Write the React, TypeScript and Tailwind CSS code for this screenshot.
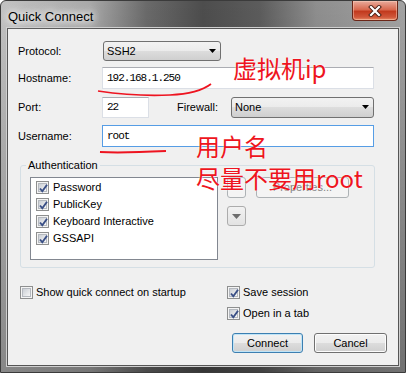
import React from 'react';

// Win7-style checkbox
function Check({ checked }: { checked?: boolean }) {
  return (
    <span className="relative flex h-[13px] w-[13px] shrink-0 items-center justify-center border border-[#8e8f8f] bg-[#f4f4f4]">
      <span className="h-[9px] w-[9px] border border-[#b5b9bf] bg-[linear-gradient(135deg,#cbcfd5,#f6f6f6)]" />
      {checked && (
        <svg className="absolute left-[1px] top-[1px]" width="11" height="11" viewBox="0 0 11 11">
          <path d="M2 5.5 L4.3 8.3 L9 1.8" fill="none" stroke="#3a4f86" strokeWidth="1.9" />
        </svg>
      )}
    </span>
  );
}

function Arrow({ color = '#000' }: { color?: string }) {
  return (
    <svg width="7" height="4" viewBox="0 0 7 4">
      <polygon points="0,0 7,0 3.5,4" fill={color} />
    </svg>
  );
}

function Combo({ value, className }: { value: string; className: string }) {
  return (
    <div
      className={`flex items-center justify-between rounded-[3px] border border-[#707070] bg-[linear-gradient(to_bottom,#f2f2f2_0%,#ebebeb_50%,#dddddd_50%,#cfcfcf_100%)] pl-[3px] pr-[4px] text-[11px] text-black ${className}`}
    >
      <span>{value}</span>
      <Arrow />
    </div>
  );
}

function Field({ value, className, focused }: { value: string; className: string; focused?: boolean }) {
  return (
    <div
      className={`flex items-center border bg-white pl-[4px] font-['Liberation_Mono',monospace] text-[11px] tracking-[-1px] text-black ${
        focused ? 'border-[#569de5]' : 'border-[#dbdfe6] border-t-[#abadb3]'
      } ${className}`}
    >
      {value}
    </div>
  );
}

const authMethods = ['Password', 'PublicKey', 'Keyboard Interactive', 'GSSAPI'];

export default function App() {
  return (
    <div className="relative h-[373px] w-[406px] overflow-hidden rounded-t-[6px] border border-[#3b3b3b] bg-[linear-gradient(to_bottom,rgba(0,0,0,0)_0%,rgba(0,0,0,0.3)_100%),linear-gradient(90deg,#c2c2c2_0%,#a9a9a9_22%,#6a6a6a_36%,#4d4d4d_50%,#5c5c5c_64%,#8e8e8e_78%,#a3a3a3_100%)] font-['Liberation_Sans',Arial,sans-serif]">
      {/* Title bar */}
      <div className="flex h-[27px] items-start justify-between">
        <div className="pl-[7px] pt-[6px] text-[13px] text-black [text-shadow:0_0_6px_#fff,0_0_10px_#fff,0_0_14px_#fff]">
          Quick Connect
        </div>
        <div className="mr-[7px] flex h-[20px] w-[46px] items-center justify-center rounded-b-[4px] border border-t-0 border-[#6b2618] bg-[linear-gradient(to_bottom,#e9ab9c_0%,#d9694f_45%,#c23a1e_55%,#d0573a_85%,#e88a66_100%)] shadow-[inset_0_0_0_1px_rgba(255,220,200,0.45)]">
          <svg width="14" height="12" viewBox="0 0 14 12">
            <path d="M3 2 L11 10 M11 2 L3 10" stroke="#4a1e14" strokeWidth="4" strokeLinecap="square" />
            <path d="M3 2 L11 10 M11 2 L3 10" stroke="#fff" strokeWidth="2.2" strokeLinecap="square" />
          </svg>
        </div>
      </div>

      {/* Client area */}
      <div className="mx-[6px] h-[338px] border border-[#555] bg-[#f0f0f0] text-[11px] text-black shadow-[0_0_0_1px_#cfcfcf]">
        <div className="mt-[12px] flex h-[20px] items-center pl-[10px]">
          <span className="w-[84px]">Protocol:</span>
          <Combo value="SSH2" className="ml-px h-[20px] w-[118px]" />
        </div>
        <div className="mt-[6px] flex h-[22px] items-center pl-[10px]">
          <span className="w-[84px]">Hostname:</span>
          <Field value="192.168.1.250" className="h-[22px] w-[272px]" />
        </div>
        <div className="mt-[7px] flex h-[22px] items-center pl-[10px]">
          <span className="w-[84px]">Port:</span>
          <Field value="22" className="h-[21px] w-[47px]" />
          <span className="ml-[28px] w-[54px]">Firewall:</span>
          <Combo value="None" className="h-[21px] w-[143px]" />
        </div>
        <div className="mt-[7px] flex h-[22px] items-center pl-[10px]">
          <span className="w-[84px]">Username:</span>
          <Field value="root" focused className="h-[22px] w-[272px]" />
        </div>

        {/* Authentication group */}
        <div className="relative ml-[12px] mt-[18px] flex h-[103px] w-[355px] items-start rounded-[3px] border border-[#d5dfe5] pl-[9px] pt-[11px]">
          <span className="absolute left-[5px] top-[-8px] bg-[#f0f0f0] px-[2px] leading-[14px]">Authentication</span>
          <div className="h-[83px] w-[188px] border border-[#828790] bg-white pl-[5px] pt-px">
            {authMethods.map((m) => (
              <div key={m} className="flex h-[17px] items-center gap-[4px]">
                <Check checked />
                <span>{m}</span>
              </div>
            ))}
          </div>
          <div className="ml-[9px] flex flex-col gap-[8px]">
            <div className="h-[21px] w-[19px] rounded-[3px] border border-[#adb2b5] bg-[#f4f4f4]" />
            <div className="flex h-[20px] w-[19px] items-center justify-center rounded-[3px] border border-[#acacac] bg-[linear-gradient(to_bottom,#f2f2f2,#e3e3e3)]">
              <svg width="9" height="5" viewBox="0 0 9 5">
                <polygon points="0,0 9,0 4.5,5" fill="#6d6d6d" />
              </svg>
            </div>
          </div>
          <div className="ml-[10px] flex h-[21px] w-[93px] items-center justify-center rounded-[3px] border border-[#adb2b5] bg-[#f4f4f4] text-[#838383]">
            Properties...
          </div>
        </div>

        {/* Options */}
        <div className="mt-[17px] grid grid-cols-[207px_1fr] gap-y-[7px] pl-[12px]">
          <label className="flex h-[14px] items-center gap-[3px]">
            <Check />
            <span>Show quick connect on startup</span>
          </label>
          <label className="flex h-[14px] items-center gap-[3px]">
            <Check checked />
            <span>Save session</span>
          </label>
          <span />
          <label className="flex h-[14px] items-center gap-[3px]">
            <Check checked />
            <span>Open in a tab</span>
          </label>
        </div>

        <div className="mt-[13px] flex justify-end gap-[11px] pr-[11px]">
          <button className="h-[20px] w-[71px] rounded-[3px] border border-[#3c7fb1] bg-[linear-gradient(to_bottom,#f2f2f2_0%,#ebebeb_50%,#dddddd_50%,#cfcfcf_100%)] shadow-[inset_0_0_0_1px_#bfe4f7]">
            Connect
          </button>
          <button className="h-[20px] w-[73px] rounded-[3px] border border-[#707070] bg-[linear-gradient(to_bottom,#f2f2f2_0%,#ebebeb_50%,#dddddd_50%,#cfcfcf_100%)] shadow-[inset_0_0_0_1px_#fcfcfc]">
            Cancel
          </button>
        </div>
      </div>

      {/* Red annotations drawn over the dialog */}
      <svg className="pointer-events-none absolute left-[-1px] top-[-1px]" width="406" height="373">
        <path d="M98 91 C125 95, 150 96, 170 95 C190 94, 203 90, 211 84" fill="none" stroke="#ee1420" strokeWidth="1.7" />
        <path d="M100 152 C120 153, 145 152, 166 151" fill="none" stroke="#ee1420" strokeWidth="2" />
      </svg>
      <div className="pointer-events-none absolute left-[232px] top-[55px] font-['Noto_Sans_CJK_SC',sans-serif] text-[24px] leading-none text-[#ee1420] [text-shadow:0_0_2px_#fff]">
        虚拟机ip
      </div>
      <div className="pointer-events-none absolute left-[195px] top-[133px] font-['Noto_Sans_CJK_SC',sans-serif] text-[24px] leading-none text-[#ee1420] [text-shadow:0_0_2px_#fff]">
        用户名
      </div>
      <div className="pointer-events-none absolute left-[195px] top-[165px] font-['Noto_Sans_CJK_SC',sans-serif] text-[24px] leading-none text-[#ee1420] [text-shadow:0_0_2px_#fff]">
        尽量不要用root
      </div>
    </div>
  );
}
